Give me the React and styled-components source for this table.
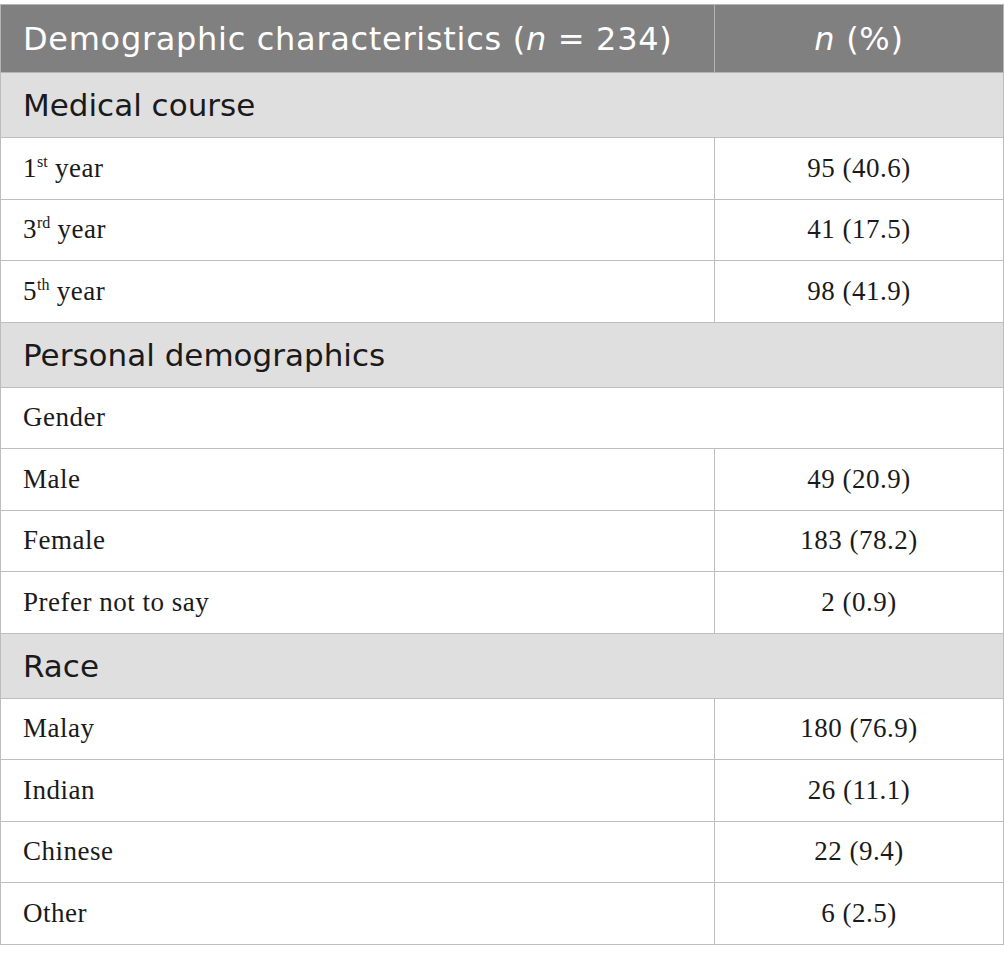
import React from "react";
import styled, { createGlobalStyle } from "styled-components";

const GlobalStyle = createGlobalStyle`
  body {
    margin: 0;
    background: #ffffff;
  }
`;

const groups = [
  {
    title: "Medical course",
    rows: [
      { label: "1", sup: "st", rest: " year", value: "95 (40.6)" },
      { label: "3", sup: "rd", rest: " year", value: "41 (17.5)" },
      { label: "5", sup: "th", rest: " year", value: "98 (41.9)" },
    ],
  },
  {
    title: "Personal demographics",
    sub: "Gender",
    rows: [
      { label: "Male", value: "49 (20.9)" },
      { label: "Female", value: "183 (78.2)" },
      { label: "Prefer not to say", value: "2 (0.9)" },
    ],
  },
  {
    title: "Race",
    rows: [
      { label: "Malay", value: "180 (76.9)" },
      { label: "Indian", value: "26 (11.1)" },
      { label: "Chinese", value: "22 (9.4)" },
      { label: "Other", value: "6 (2.5)" },
    ],
  },
];

function App() {
  return (
    <Page>
      <GlobalStyle />
      <Table>
        <colgroup>
          <col style={{ width: 714 }} />
          <col />
        </colgroup>
        <thead>
          <tr>
            <HeadCell>
              Demographic characteristics (<i>n</i> = 234)
            </HeadCell>
            <HeadCell center>
              <i>n</i> (%)
            </HeadCell>
          </tr>
        </thead>
        <tbody>
          {groups.map((g) => (
            <React.Fragment key={g.title}>
              <tr>
                <SectionCell colSpan={2}>{g.title}</SectionCell>
              </tr>
              {g.sub && (
                <tr>
                  <Cell colSpan={2}>{g.sub}</Cell>
                </tr>
              )}
              {g.rows.map((r) => (
                <tr key={r.label}>
                  <Cell>
                    {r.label}
                    {r.sup && <Sup>{r.sup}</Sup>}
                    {r.rest}
                  </Cell>
                  <Cell center>{r.value}</Cell>
                </tr>
              ))}
            </React.Fragment>
          ))}
        </tbody>
      </Table>
    </Page>
  );
}

const Page = styled.div`
  padding-top: 4px;
  width: 1004px;
`;

const Table = styled.table`
  width: 1004px;
  border-collapse: collapse;
  table-layout: fixed;
`;

const HeadCell = styled.th`
  height: 67px;
  padding: 0 22px;
  background: #808080;
  color: #ffffff;
  border: 1px solid #b5b5b5;
  font-family: "DejaVu Sans", Inter, sans-serif;
  font-weight: 400;
  font-size: 32px;
  letter-spacing: 0.7px;
  text-align: ${(p) => (p.center ? "center" : "left")};
`;

const SectionCell = styled.td`
  height: 64px;
  padding: 0 22px;
  background: #e0dfe0;
  color: #1a1a1a;
  border: 1px solid #bdbdbd;
  font-family: "DejaVu Sans", Inter, sans-serif;
  font-size: 31px;
`;

const Cell = styled.td`
  height: 60.5px;
  padding: 0 22px;
  color: #1a1a1a;
  border: 1px solid #bdbdbd;
  font-family: "Liberation Serif", serif;
  font-size: 27px;
  letter-spacing: 0.5px;
  text-align: ${(p) => (p.center ? "center" : "left")};
`;

const Sup = styled.sup`
  font-size: 16px;
  line-height: 0;
  letter-spacing: 0;
`;

export default App;
